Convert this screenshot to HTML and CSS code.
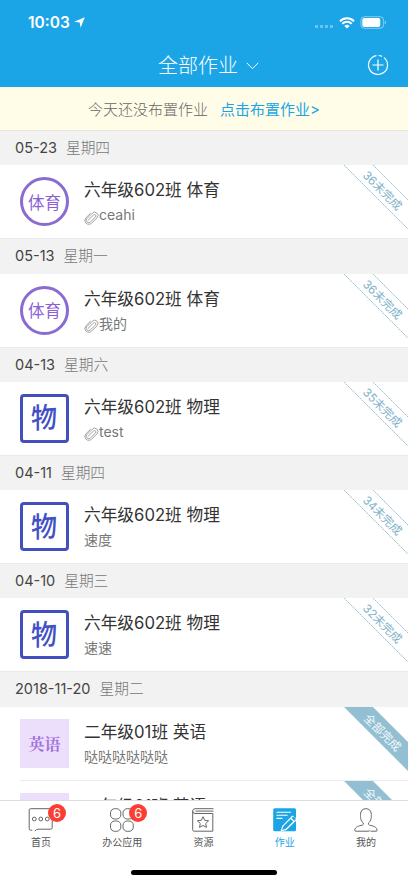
FILE: index.html
```html
<!DOCTYPE html>
<html lang="zh-CN">
<head>
    <meta charset="UTF-8">
    <meta name="viewport" content="width=device-width, initial-scale=1.0">
    <title>全部作业</title>
    <link rel="stylesheet" href="styles.css">
</head>
<body>

    <!-- 公用图形 -->
    <svg class="defs" width="0" height="0">
        <symbol id="clip" viewBox="0 0 15 15">
            <path d="M4.2 10.2 9.5 5a1.4 1.4 0 0 1 2 2L6.500 11.800a2.400 2.400 0 0 1-3.600-3.200L8.200 3.300a3.300 3.300 0 0 1 4.900 4.500L7.800 12.800a3.900 3.900 0 0 1-5.900.3 3.900 3.900 0 0 1 0-5.300L6.500 3.300" fill="none" stroke="#999" stroke-width=".9" stroke-linecap="round"/>
        </symbol>
    </svg>

    <header class="header">
        <div class="status">
            <span class="time">10:03</span>
            <svg class="location" width="11" height="11" viewBox="0 0 11 11"><path d="M10.800.2 6.600 10.800 5.700 5.500.2 4.800z" fill="#fff"/></svg>
            <span class="dots"><i></i><i></i><i></i><i></i></span>
            <svg class="wifi" width="16" height="12" viewBox="0 0 16 12">
                <path d="M1 4.200a10 10 0 0 1 14 0M3.300 6.700a6.700 6.700 0 0 1 9.400 0" fill="none" stroke="#fff" stroke-width="2"/>
                <path d="M5.400 8.900a3.800 3.800 0 0 1 5.200 0L8 11.600z" fill="#fff"/>
            </svg>
            <svg class="battery" width="27" height="13" viewBox="0 0 27 13">
                <rect x=".9" y=".7" width="22.700" height="11.600" rx="3.400" fill="none" stroke="#fff" stroke-opacity=".45"/>
                <rect x="2.300" y="2.100" width="18" height="8.800" rx="2" fill="#fff"/>
                <path d="M24.800 4.500v4c1.600-.7 1.600-3.300 0-4z" fill="#fff" fill-opacity=".5"/>
            </svg>
        </div>
        <div class="navbar">
            <h1>全部作业</h1>
            <svg class="arrow" width="13" height="8" viewBox="0 0 13 8"><path d="M.7.8 6.500 6.700 12.300.8" fill="none" stroke="#fff"/></svg>
            <svg class="add" width="22" height="22" viewBox="0 0 22 22">
                <path d="M17 3.600A9.500 9.500 0 1 1 9.500 1.600M11.500 1.500A9.500 9.500 0 0 1 15 2.400M11 5.500v11M5.500 11h11" fill="none" stroke="#fff" stroke-width="1.200"/>
            </svg>
        </div>
    </header>

    <div class="notice"><span>今天还没布置作业</span><a>点击布置作业&gt;</a></div>

    <main class="list">
        <div class="date"><b>05-23</b><span>星期四</span></div>
        <div class="item">
            <div class="subject sport">体育</div>
            <div class="info">
                <h2>六年级602班 体育</h2>
                <p><svg width="15" height="15"><use href="#clip"/></svg>ceahi</p>
            </div>
            <svg class="ribbon" width="64" height="74"><path d="M0 0 64 64M29 0 64 35"/><text x="0" y="0">36未完成</text></svg>
        </div>

        <div class="date"><b>05-13</b><span>星期一</span></div>
        <div class="item">
            <div class="subject sport">体育</div>
            <div class="info">
                <h2>六年级602班 体育</h2>
                <p><svg width="15" height="15"><use href="#clip"/></svg>我的</p>
            </div>
            <svg class="ribbon" width="64" height="74"><path d="M0 0 64 64M29 0 64 35"/><text x="0" y="0">36未完成</text></svg>
        </div>

        <div class="date"><b>04-13</b><span>星期六</span></div>
        <div class="item">
            <div class="subject physics"><i>物</i></div>
            <div class="info">
                <h2>六年级602班 物理</h2>
                <p><svg width="15" height="15"><use href="#clip"/></svg>test</p>
            </div>
            <svg class="ribbon" width="64" height="74"><path d="M0 0 64 64M29 0 64 35"/><text x="0" y="0">35未完成</text></svg>
        </div>

        <div class="date"><b>04-11</b><span>星期四</span></div>
        <div class="item">
            <div class="subject physics"><i>物</i></div>
            <div class="info">
                <h2>六年级602班 物理</h2>
                <p>速度</p>
            </div>
            <svg class="ribbon" width="64" height="74"><path d="M0 0 64 64M29 0 64 35"/><text x="0" y="0">34未完成</text></svg>
        </div>

        <div class="date"><b>04-10</b><span>星期三</span></div>
        <div class="item">
            <div class="subject physics"><i>物</i></div>
            <div class="info">
                <h2>六年级602班 物理</h2>
                <p>速速</p>
            </div>
            <svg class="ribbon" width="64" height="74"><path d="M0 0 64 64M29 0 64 35"/><text x="0" y="0">32未完成</text></svg>
        </div>

        <div class="date"><b>2018-11-20</b><span>星期二</span></div>
        <div class="item inset">
            <div class="subject english">英语</div>
            <div class="info">
                <h2>二年级01班 英语</h2>
                <p>哒哒哒哒哒哒</p>
            </div>
            <svg class="ribbon done" width="64" height="74"><path d="M0 0H29L64 35V64z"/><text x="0" y="0">全部完成</text></svg>
        </div>
        <div class="item">
            <div class="subject english">英语</div>
            <div class="info">
                <h2>二年级01班 英语</h2>
            </div>
            <svg class="ribbon done" width="64" height="74"><path d="M0 0H29L64 35V64z"/><text x="0" y="0">全部完成</text></svg>
        </div>
    </main>

    <!-- 底部导航 -->
    <footer class="footer">
        <nav class="tabs">
            <div class="tab">
                <svg width="26" height="26" viewBox="0 0 26 26" fill="none" stroke="#666">
                    <path d="M4.200 23.200H2.700A1.500 1.500 0 0 1 1.200 21.700V3.200A1.500 1.500 0 0 1 2.700 1.700H22.700A1.500 1.500 0 0 1 24.200 3.200V20.700A1.500 1.500 0 0 1 22.700 22.200H10.200Q8.500 22.200 6.800 24"/>
                    <circle cx="6.300" cy="12" r="1.900"/><circle cx="12.800" cy="12" r="1.900"/><circle cx="19.300" cy="12" r="1.900"/>
                </svg>
                <em>6</em>
                <span>首页</span>
            </div>
            <div class="tab">
                <svg width="26" height="26" viewBox="0 0 26 26" fill="none" stroke="#666">
                    <rect x="1.500" y="1.700" width="10.300" height="10.300" rx="4.200"/><rect x="14" y="1.700" width="10.300" height="10.300" rx="4.200"/>
                    <rect x="1.500" y="14" width="10.300" height="10.300" rx="4.200"/><rect x="14" y="14" width="10.300" height="10.300" rx="4.200"/>
                </svg>
                <em>6</em>
                <span>办公应用</span>
            </div>
            <div class="tab">
                <svg width="26" height="26" viewBox="0 0 26 26" fill="none" stroke="#666">
                    <path d="M23.500 1.700H5A2.400 2.400 0 0 0 2.700 4V22.700A1.500 1.500 0 0 0 4.200 24.200H22.800V6.500H5A2.400 2.400 0 0 1 2.700 4.200M5.500 4.100H23.500"/>
                    <path d="m13 9.700 1.700 3.600 3.900.5-2.900 2.700.8 3.900-3.500-1.900-3.500 1.900.8-3.900-2.900-2.700 3.900-.5z"/>
                </svg>
                <span>资源</span>
            </div>
            <div class="tab active">
                <svg width="26" height="26" viewBox="0 0 26 26">
                    <path d="M2.700 1.200H22.500A1.500 1.500 0 0 1 24 2.700V22.800A1.500 1.500 0 0 1 22.500 24.300H2.700A1.500 1.500 0 0 1 1.200 22.800V2.700A1.500 1.500 0 0 1 2.700 1.200z" fill="#1ba5e6"/>
                    <path d="M4.500 5.200H19M4.500 8.300H15.500M4.500 11.400H10.500" stroke="#fff" stroke-width="1.100"/>
                    <path d="M8.500 24.300 10.400 18.700 20.300 8.600 25.500 12.300 14.200 23.200z" fill="#fff"/>
                    <path d="M9.900 23 11.500 19.200 18.700 12 21.200 14.500 13.900 21.700zM19.600 11.100 20.700 10a1 1 0 0 1 1.400 0l1.300 1.300a1 1 0 0 1 0 1.400L22.200 13.700z" fill="#1ba5e6"/>
                </svg>
                <span>作业</span>
            </div>
            <div class="tab">
                <svg width="26" height="26" viewBox="0 0 26 26" fill="none" stroke="#666">
                    <path d="M17.500 24.200H23.200Q24.400 24.200 24 22.800C23.500 19.800 20 18.900 16.500 18.200Q14.800 17.600 15.600 15.800C18.600 13.500 18.300 10 18.300 7.500C18.300 3.700 16.200 1.700 12.900 1.700S7.500 3.700 7.500 7.500C7.500 10 7.200 13.500 10.200 15.800Q11 17.600 9.300 18.200C5.800 18.900 2.300 19.800 1.800 22.800Q1.500 24.200 2.600 24.200H15Q16.500 24.200 16.800 23.500"/>
                </svg>
                <span>我的</span>
            </div>
        </nav>
        <div class="home-bar"></div>
    </footer>

</body>
</html>
```
FILE: styles.css
```css
* {
    box-sizing: border-box;
}

body {
    margin: 0;
    height: 883px;
    display: flex;
    flex-direction: column;
    overflow: hidden;
    background: #fff;
    font-family: Inter, "Noto Sans CJK SC", sans-serif;
}

svg {
    display: block;
    flex-shrink: 0;
}

.defs {
    position: absolute;
}

/* 顶部 */
.header {
    height: 87px;
    flex-shrink: 0;
    background: #1ba5e6;
    color: #fff;
}

.status {
    display: flex;
    align-items: center;
    height: 43px;
    padding: 2px 21px 0 28px;
}

.time {
    width: 43px;
    font-size: 15.5px;
    font-weight: 600;
}

.location {
    margin-left: 3px;
}

.dots {
    display: flex;
    gap: 2px;
    margin: 7px 6px 0 auto;
}

.dots i {
    width: 3px;
    height: 3px;
    background: rgba(255, 255, 255, 0.35);
}

.battery {
    margin-left: 5px;
}

.navbar {
    display: flex;
    align-items: center;
    height: 44px;
    padding: 0 19px 0 158px;
}

h1 {
    margin: 0;
    padding-top: 1px;
    font-size: 20px;
    line-height: 30px;
    font-weight: 300;
}

.arrow {
    margin: 1px 0 0 8px;
}

.add {
    margin-left: auto;
}

.notice {
    display: flex;
    justify-content: center;
    gap: 12px;
    height: 44px;
    flex-shrink: 0;
    background: #fffde8;
    border-bottom: 1px solid #e8e6d5;
    color: #666;
    font-size: 15px;
    font-weight: 300;
    line-height: 45px;
    white-space: nowrap;
}

.notice a {
    color: #1ba5e6;
    font-weight: 400;
}

/* 作业列表 */
.list {
    flex: 1;
    min-height: 0;
    overflow: hidden;
}

.date {
    display: flex;
    gap: 9px;
    height: 34.3px;
    padding-left: 15px;
    background: #f2f2f2;
    font-size: 14.7px;
    line-height: 34px;
}

.date b {
    font-size: 14.5px;
    font-weight: 400;
    color: #444;
}

.date span {
    font-weight: 300;
    color: #777;
}

.item {
    position: relative;
    display: flex;
    gap: 15px;
    height: 74px;
    padding: 12px 0 0 20px;
    border-bottom: 1px solid #e9e9e9;
}

/* 同一天的分隔线左侧留空 */
.item.inset {
    border-bottom-color: transparent;
    background: linear-gradient(#ececec, #ececec) 20px 100% / 100% 1px no-repeat border-box;
}

.subject {
    width: 49px;
    height: 49px;
    flex-shrink: 0;
    display: flex;
    align-items: center;
    justify-content: center;
    font-family: "Noto Sans CJK SC", sans-serif;
}

.sport {
    border: 3px solid #8a6bd1;
    border-radius: 50%;
    color: #8a5fd8;
    font-size: 16.5px;
}

.physics {
    border: 3px solid #424fbd;
    border-radius: 4px;
    color: #4150c4;
    font-size: 26px;
    font-weight: 500;
}

.physics i {
    font-style: normal;
    line-height: 36px;
    transform: translateY(-2px) scaleY(1.1) skewY(-3deg);
}

.english {
    background: #ecdffc;
    color: #a373dc;
    font-family: "Noto Serif CJK SC", "Noto Sans CJK SC", serif;
    font-size: 16px;
    font-weight: 700;
}

h2 {
    margin: 0;
    color: #333;
    font-size: 16.7px;
    line-height: 26px;
    font-weight: 400;
    white-space: nowrap;
}

.info p {
    display: flex;
    align-items: center;
    height: 24px;
    margin: 0;
    color: #777;
    font-size: 14px;
    line-height: 24px;
}

.info p svg {
    margin-top: 4px;
}

.ribbon {
    position: absolute;
    top: 0;
    right: 0;
}

.ribbon path {
    fill: none;
    stroke: #8fbfd3;
    stroke-width: 0.9;
    stroke-dasharray: 2 0.5;
}

.ribbon text {
    fill: #7fb2ca;
    font-size: 11.7px;
    text-anchor: middle;
    transform: translate(35.5px, 28.5px) rotate(45deg);
}

.ribbon.done path {
    fill: #93bfd2;
    stroke: none;
}

.ribbon.done text {
    fill: #f4fafc;
}

/* 底部 */
.footer {
    height: 83px;
    flex-shrink: 0;
    border-top: 1px solid #ddd;
    background: #fff;
}

.tabs {
    display: grid;
    grid-template-columns: repeat(5, 1fr);
    height: 69px;
    padding: 0 1.5px 0 0.5px;
}

.tab {
    position: relative;
    display: flex;
    flex-direction: column;
    align-items: center;
    padding-top: 6px;
    color: #555;
    font-size: 10px;
    line-height: 14px;
}

.tab span {
    margin-top: 2px;
}

.tab.active {
    color: #1ba5e6;
}

/* 未读数 */
.tab em {
    position: absolute;
    top: 3px;
    left: 47.5px;
    width: 18px;
    height: 18px;
    border-radius: 50%;
    background: #fc3d33;
    color: #fff;
    font-size: 13px;
    font-style: normal;
    line-height: 18px;
    text-align: center;
}

.home-bar {
    width: 146px;
    height: 5px;
    margin: 0 auto;
    border-radius: 3px;
    background: #000;
}
```
